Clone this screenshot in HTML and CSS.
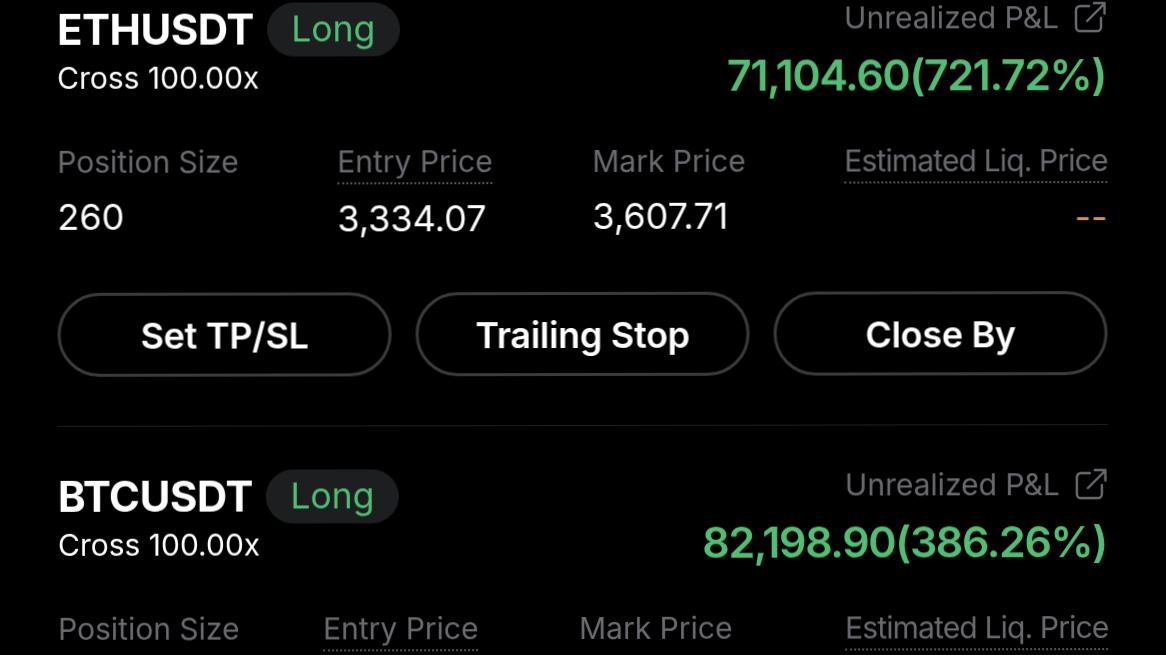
FILE: index.html
```html
<!DOCTYPE html>
<html lang="en">
  <head>
    <meta charset="UTF-8" />
    <title>Positions</title>
    <link rel="stylesheet" href="styles.css">
  </head>
  <body>
    <div class="positions">
      <section class="position">
        <div class="head">
          <div>
            <div class="symbol-row">
              <span class="symbol">ETHUSDT</span>
              <span class="side">Long</span>
            </div>
            <div class="margin">Cross 100.00x</div>
          </div>
          <div class="pnl">
            <div class="pnl-label">
              Unrealized P&amp;L
              <svg class="share" viewBox="0 0 32 32" fill="none" stroke="#6a6b70" stroke-width="2.4" stroke-linecap="round" stroke-linejoin="round">
                <path d="M15 5H6a4 4 0 0 0-4 4v17a4 4 0 0 0 4 4h17a4 4 0 0 0 4-4v-9" />
                <path d="M13 20 30 3M20 2h10.500v10.500" />
              </svg>
            </div>
            <div class="pnl-value">71,104.60(721.72%)</div>
          </div>
        </div>
        <div class="stats stats-eth">
          <div class="stat">
            <div class="stat-label">Position Size</div>
            <div class="stat-value">260</div>
          </div>
          <div class="stat">
            <div class="stat-label dotted">Entry Price</div>
            <div class="stat-value">3,334.07</div>
          </div>
          <div class="stat">
            <div class="stat-label">Mark Price</div>
            <div class="stat-value">3,607.71</div>
          </div>
          <div class="stat">
            <div class="stat-label dotted tight">Estimated Liq. Price</div>
            <div class="stat-value empty">--</div>
          </div>
        </div>
        <div class="actions">
          <button class="action">Set TP/SL</button>
          <button class="action">Trailing Stop</button>
          <button class="action">Close By</button>
        </div>
      </section>
      <section class="position">
        <div class="head">
          <div>
            <div class="symbol-row">
              <span class="symbol">BTCUSDT</span>
              <span class="side">Long</span>
            </div>
            <div class="margin">Cross 100.00x</div>
          </div>
          <div class="pnl">
            <div class="pnl-label">
              Unrealized P&amp;L
              <svg class="share" viewBox="0 0 32 32" fill="none" stroke="#6a6b70" stroke-width="2.4" stroke-linecap="round" stroke-linejoin="round">
                <path d="M15 5H6a4 4 0 0 0-4 4v17a4 4 0 0 0 4 4h17a4 4 0 0 0 4-4v-9" />
                <path d="M13 20 30 3M20 2h10.500v10.500" />
              </svg>
            </div>
            <div class="pnl-value">82,198.90(386.26%)</div>
          </div>
        </div>
        <div class="stats stats-btc">
          <div class="stat">
            <div class="stat-label">Position Size</div>
          </div>
          <div class="stat">
            <div class="stat-label dotted">Entry Price</div>
          </div>
          <div class="stat">
            <div class="stat-label">Mark Price</div>
          </div>
          <div class="stat">
            <div class="stat-label dotted tight">Estimated Liq. Price</div>
          </div>
        </div>
      </section>
    </div>
  </body>
</html>
```

FILE: styles.css
```css
html,
body {
  height: 100%;
}
body {
  margin: 0;
  overflow: hidden;
  background-color: #000000;
  color: #ffffff;
  font-family: Inter, "Liberation Sans", sans-serif;
}
/* the source picture sits very slightly tilted and soft */
.positions {
  padding: 3px 59px 0 57px;
  transform: rotate(-0.1deg);
  transform-origin: 0 0;
  filter: blur(0.3px);
}
.position {
  padding-bottom: 49px;
}
.position + .position {
  padding-top: 43px;
  border-top: 1px solid #1e1f22;
}
.head {
  display: flex;
  justify-content: space-between;
}
.symbol-row {
  display: flex;
  align-items: center;
  gap: 13px;
}
.symbol {
  font-size: 42px;
  font-weight: 700;
  letter-spacing: -0.5px;
  line-height: 54px;
}
.side {
  width: 133px;
  height: 54px;
  line-height: 54px;
  text-align: center;
  border-radius: 27px;
  background-color: #1c1e20;
  color: #4fbf73;
  font-size: 35.5px;
}
.margin {
  font-size: 30px;
  line-height: 36px;
  margin-top: 3px;
}
.pnl {
  padding-right: 1px;
  text-align: right;
}
.pnl-label {
  display: flex;
  justify-content: flex-end;
  align-items: center;
  gap: 15px;
  color: #6a6b70;
  font-size: 30px;
  line-height: 32px;
}
.share {
  width: 32px;
  height: 32px;
}
.pnl-value {
  margin-top: 15px;
  color: #4fbf73;
  font-size: 43px;
  font-weight: 600;
  line-height: 52px;
  letter-spacing: -1.4px;
}
.stats {
  display: grid;
  margin-top: 42px;
}
.stats-eth {
  grid-template-columns: 280px 255px 252px 1fr;
}
.stats-btc {
  grid-template-columns: 265px 256px 266px 1fr;
}
.stat-label {
  display: inline-block;
  color: #6a6b70;
  font-size: 30px;
  line-height: 36px;
  padding-bottom: 3px;
  white-space: nowrap;
}
.stat-label.dotted {
  border-bottom: 2px dotted #55565a;
}
.stat-label.tight {
  letter-spacing: -0.85px;
}
.stat-value {
  margin-top: 14px;
  font-size: 36px;
  line-height: 40px;
}
.stat-value.empty {
  color: #d9924a;
  text-align: right;
}
.actions {
  display: flex;
  gap: 24px;
  margin-top: 54px;
}
.action {
  flex: 1;
  height: 84px;
  padding-top: 2px;
  border: 3px solid #3a3b3e;
  border-radius: 42px;
  background: none;
  color: #ffffff;
  font-family: inherit;
  font-size: 36px;
  font-weight: 600;
  letter-spacing: -0.3px;
}
```
